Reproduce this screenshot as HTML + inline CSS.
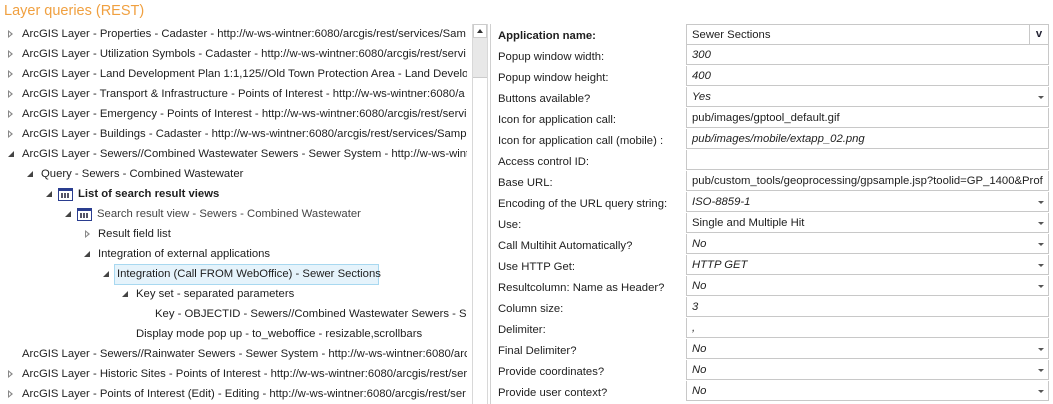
<!DOCTYPE html>
<html><head><style>
body{margin:0;width:1053px;height:404px;background:#fff;font-family:"Liberation Sans",sans-serif;font-size:11.3px;color:#1e1e1e;overflow:hidden;position:relative}
.a{position:absolute;white-space:nowrap}
.title{left:4px;top:3px;font-size:14.5px;color:#f0a040}
.tree{position:absolute;left:0;top:24px;width:467px;height:380px;overflow:hidden}
.r{position:absolute;height:20px;line-height:20px;white-space:nowrap}
.tc{position:absolute;width:0;height:0;border-top:4px solid transparent;border-bottom:4px solid transparent;border-left:5px solid #888}
.tc:after{content:"";position:absolute;left:-4px;top:-2px;border-top:2px solid transparent;border-bottom:2px solid transparent;border-left:2.5px solid #fff}
.te{position:absolute;width:0;height:0;border-left:6px solid transparent;border-bottom:6px solid #444}
.ic{position:absolute;width:13px;height:11px;border:1px solid #2a3d8f;background:#fff}
.ic:before{content:"";position:absolute;left:0;right:0;top:0;height:2px;background:#2a3d8f}
.ic:after{content:"";position:absolute;left:2px;top:4px;width:9px;height:5px;background:repeating-linear-gradient(90deg,#556 0 2px,#fff 2px 3px)}
.lab{position:absolute;left:498px;white-space:nowrap}
.val{position:absolute;left:686px;width:363px;height:20px;border:1px solid #c8c8c8;border-top:none;line-height:20px;padding-left:5px;box-sizing:border-box;white-space:nowrap;overflow:hidden}
.it{font-style:italic}
.dd{position:absolute;right:4px;top:9px;border-left:3px solid transparent;border-right:3px solid transparent;border-top:3px solid #555}
</style></head><body>
<div class="a title">Layer queries (REST)</div>
<div class="tree">
<div class="r" style="left:22px;top:0">ArcGIS Layer - Properties - Cadaster - http://w-ws-wintner:6080/arcgis/rest/services/Sam</div>
<div class="tc" style="left:8px;top:6px"></div>
<div class="r" style="left:22px;top:20px">ArcGIS Layer - Utilization Symbols - Cadaster - http://w-ws-wintner:6080/arcgis/rest/servi</div>
<div class="tc" style="left:8px;top:26px"></div>
<div class="r" style="left:22px;top:40px">ArcGIS Layer - Land Development Plan 1:1,125//Old Town Protection Area - Land Develop</div>
<div class="tc" style="left:8px;top:46px"></div>
<div class="r" style="left:22px;top:60px">ArcGIS Layer - Transport &amp; Infrastructure - Points of Interest - http://w-ws-wintner:6080/a</div>
<div class="tc" style="left:8px;top:66px"></div>
<div class="r" style="left:22px;top:80px">ArcGIS Layer - Emergency - Points of Interest - http://w-ws-wintner:6080/arcgis/rest/servi</div>
<div class="tc" style="left:8px;top:86px"></div>
<div class="r" style="left:22px;top:100px">ArcGIS Layer - Buildings - Cadaster - http://w-ws-wintner:6080/arcgis/rest/services/Sampl</div>
<div class="tc" style="left:8px;top:106px"></div>
<div class="r" style="left:22px;top:120px">ArcGIS Layer - Sewers//Combined Wastewater Sewers - Sewer System - http://w-ws-wint</div>
<div class="te" style="left:8px;top:127px"></div>
<div class="r" style="left:41px;top:140px">Query - Sewers - Combined Wastewater</div>
<div class="te" style="left:27px;top:147px"></div>
<div class="te" style="left:46px;top:167px"></div>
<div class="ic" style="left:58px;top:164px"></div>
<div class="r" style="left:78px;top:160px;font-weight:bold">List of search result views</div>
<div class="te" style="left:65px;top:187px"></div>
<div class="ic" style="left:77px;top:184px"></div>
<div class="r" style="left:97px;top:180px;color:#444">Search result view - Sewers - Combined Wastewater</div>
<div class="tc" style="left:85px;top:206px"></div>
<div class="r" style="left:98px;top:200px">Result field list</div>
<div class="te" style="left:84px;top:227px"></div>
<div class="r" style="left:98px;top:220px">Integration of external applications</div>
<div class="te" style="left:103px;top:247px"></div>
<div style="position:absolute;left:114px;top:240px;width:263px;height:19px;background:#e5f3fb;border:1px solid #a8d8f0"></div>
<div class="r" style="left:117px;top:240px">Integration (Call FROM WebOffice) - Sewer Sections</div>
<div class="te" style="left:122px;top:267px"></div>
<div class="r" style="left:136px;top:260px">Key set - separated parameters</div>
<div class="r" style="left:155px;top:280px">Key - OBJECTID - Sewers//Combined Wastewater Sewers - Sew</div>
<div class="r" style="left:136px;top:300px">Display mode pop up - to_weboffice - resizable,scrollbars</div>
<div class="r" style="left:22px;top:320px">ArcGIS Layer - Sewers//Rainwater Sewers - Sewer System - http://w-ws-wintner:6080/arcg</div>
<div class="r" style="left:22px;top:340px">ArcGIS Layer - Historic Sites - Points of Interest - http://w-ws-wintner:6080/arcgis/rest/ser</div>
<div class="tc" style="left:8px;top:346px"></div>
<div class="r" style="left:22px;top:360px">ArcGIS Layer - Points of Interest (Edit) - Editing - http://w-ws-wintner:6080/arcgis/rest/ser</div>
<div class="tc" style="left:8px;top:366px"></div>
</div>
<div style="position:absolute;left:472px;top:24px;width:16px;height:380px;border-left:1px solid #d8d8d8;border-right:1px solid #d8d8d8;box-sizing:border-box"></div>
<div style="position:absolute;left:473px;top:24px;width:14px;height:54px;background:#e8e8e8"></div>
<div style="position:absolute;left:473px;top:24px;width:14px;height:14px;background:#fff;border:1px solid #ccc;box-sizing:border-box"></div>
<div style="position:absolute;left:477px;top:29px;border-left:3px solid transparent;border-right:3px solid transparent;border-bottom:4px solid #333"></div>
<div style="position:absolute;left:473px;top:77px;width:14px;height:1px;background:#ccc"></div>
<div style="position:absolute;left:490px;top:24px;width:1px;height:380px;background:#d0d0d0"></div>
<div style="position:absolute;left:686px;top:24px;width:363px;height:1px;background:#c8c8c8"></div>
<div class="lab" style="top:30px;font-weight:bold">Application name:</div>
<div class="val" style="top:25px">Sewer Sections<div style="position:absolute;right:0;top:0;width:18px;height:19px;border-left:1px solid #c8c8c8;text-align:center;font-weight:bold;color:#223;line-height:19px">v</div></div>
<div class="lab" style="top:51px">Popup window width:</div><div class="val it" style="top:45px">300</div>
<div class="lab" style="top:72px">Popup window height:</div><div class="val it" style="top:66px">400</div>
<div class="lab" style="top:93px">Buttons available?</div><div class="val it" style="top:87px">Yes<div class="dd"></div></div>
<div class="lab" style="top:114px">Icon for application call:</div><div class="val" style="top:108px">pub/images/gptool_default.gif</div>
<div class="lab" style="top:135px">Icon for application call (mobile) :</div><div class="val it" style="top:129px">pub/images/mobile/extapp_02.png</div>
<div class="lab" style="top:156px">Access control ID:</div><div class="val" style="top:150px"></div>
<div class="lab" style="top:177px">Base URL:</div><div class="val" style="top:171px">pub/custom_tools/geoprocessing/gpsample.jsp?toolid=GP_1400&amp;Prof</div>
<div class="lab" style="top:198px">Encoding of the URL query string:</div><div class="val it" style="top:192px">ISO-8859-1<div class="dd"></div></div>
<div class="lab" style="top:219px">Use:</div><div class="val" style="top:213px">Single and Multiple Hit<div class="dd"></div></div>
<div class="lab" style="top:240px">Call Multihit Automatically?</div><div class="val it" style="top:234px">No<div class="dd"></div></div>
<div class="lab" style="top:261px">Use HTTP Get:</div><div class="val it" style="top:255px">HTTP GET<div class="dd"></div></div>
<div class="lab" style="top:282px">Resultcolumn: Name as Header?</div><div class="val it" style="top:276px">No<div class="dd"></div></div>
<div class="lab" style="top:303px">Column size:</div><div class="val it" style="top:297px">3</div>
<div class="lab" style="top:324px">Delimiter:</div><div class="val it" style="top:318px">,</div>
<div class="lab" style="top:345px">Final Delimiter?</div><div class="val it" style="top:339px">No<div class="dd"></div></div>
<div class="lab" style="top:366px">Provide coordinates?</div><div class="val it" style="top:360px">No<div class="dd"></div></div>
<div class="lab" style="top:387px">Provide user context?</div><div class="val it" style="top:381px">No<div class="dd"></div></div>
</body></html>
